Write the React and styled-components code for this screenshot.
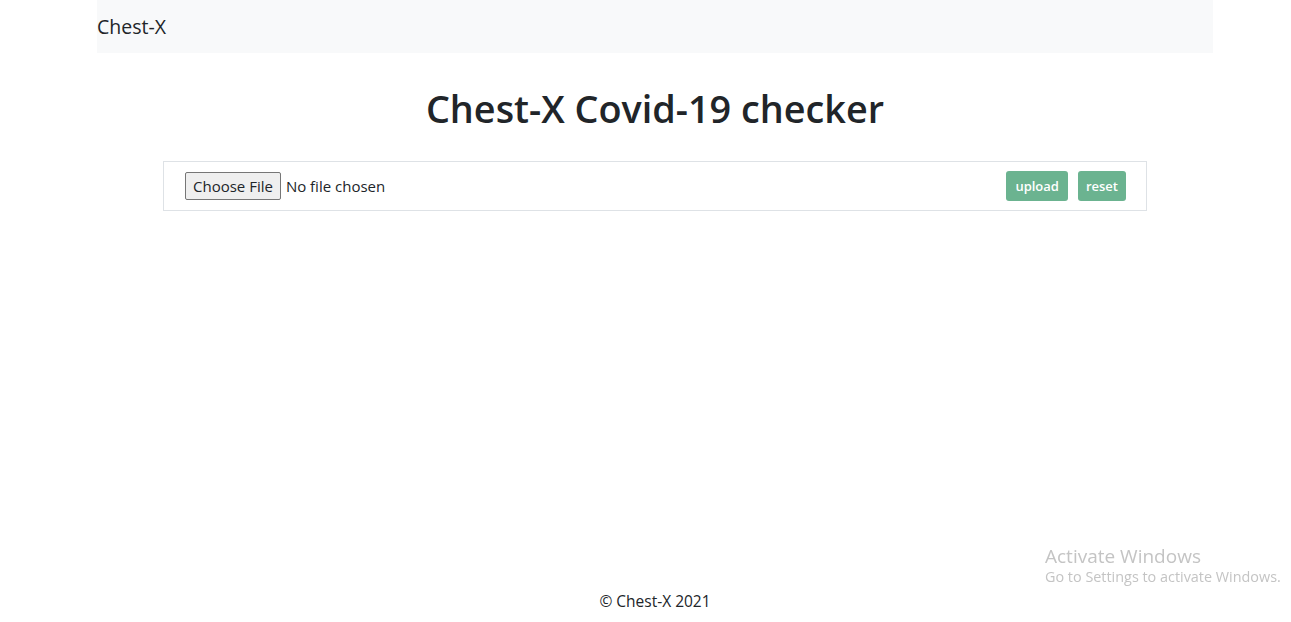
import React from "react";
import styled, { createGlobalStyle } from "styled-components";

const Global = createGlobalStyle`
  html, body { margin: 0; padding: 0; background: #fff; }
  body { font-family: "Open Sans", "Noto Sans", sans-serif; color: #212529; }
  * { box-sizing: border-box; }
`;

const Page = styled.div`
  width: 1291px;
  height: 622px;
  display: flex;
  flex-direction: column;
  overflow: hidden;
`;

const Container = styled.div`
  margin-left: 97px;
  width: 1116px;
`;

const Nav = styled.nav`
  height: 53px;
  background: #f8f9fa;
  display: flex;
  align-items: center;
`;

const Brand = styled.span`
  font-size: 19.5px;
  font-weight: 400;
  color: #212529;
  margin-top: -1px;
`;

const Main = styled(Container)`
  flex: 1;
  display: flex;
  flex-direction: column;
  align-items: center;
  padding-top: 30px;
`;

const Title = styled.h1`
  margin: 0;
  font-size: 37.8px;
  font-weight: 600;
  line-height: 52px;
`;

const Card = styled.div`
  margin-top: 26px;
  width: 984px;
  height: 50px;
  border: 1px solid #dee2e6;
  display: flex;
  align-items: center;
  padding: 0 20px 0 21px;
`;

const FileLabel = styled.div`
  display: flex;
  align-items: center;
  gap: 5px;
  font-size: 15px;
`;

const FileButton = styled.span`
  display: inline-flex;
  align-items: center;
  height: 28px;
  padding: 0 7px;
  background: #efefef;
  border: 1px solid #767676;
  border-radius: 2px;
  font-size: 15px;
  color: #212529;
`;

const Spacer = styled.div`
  flex: 1;
`;

const Btn = styled.button`
  height: 30px;
  padding: 0 ${(p) => (p.$first ? "9px" : "8px")};
  border: none;
  border-radius: 3px;
  background: #6bb390;
  color: #fff;
  font-family: inherit;
  font-weight: 600;
  font-size: 13px;
  margin-left: ${(p) => (p.$first ? "0" : "10px")};
`;

const Footer = styled(Container)`
  text-align: center;
  font-size: 15.5px;
  height: 32px;
`;

const Watermark = styled.div`
  position: fixed;
  left: 1045px;
  top: 545px;
  color: #c4c4c4;
  font-family: "Open Sans", sans-serif;
  pointer-events: none;
`;

const WmTitle = styled.div`
  font-size: 19px;
  line-height: 22px;
`;

const WmSub = styled.div`
  font-size: 14.4px;
  line-height: 18px;
  margin-top: 1px;
`;

export default function App() {
  return (
    <Page>
      <Global />
      <Container>
        <Nav>
          <Brand>Chest-X</Brand>
        </Nav>
      </Container>
      <Main>
        <Title>Chest-X Covid-19 checker</Title>
        <Card>
          <FileLabel>
            <FileButton>Choose File</FileButton>
            <span>No file chosen</span>
          </FileLabel>
          <Spacer />
          <Btn $first>upload</Btn>
          <Btn>reset</Btn>
        </Card>
      </Main>
      <Footer>© Chest-X 2021</Footer>
      <Watermark>
        <WmTitle>Activate Windows</WmTitle>
        <WmSub>Go to Settings to activate Windows.</WmSub>
      </Watermark>
    </Page>
  );
}
